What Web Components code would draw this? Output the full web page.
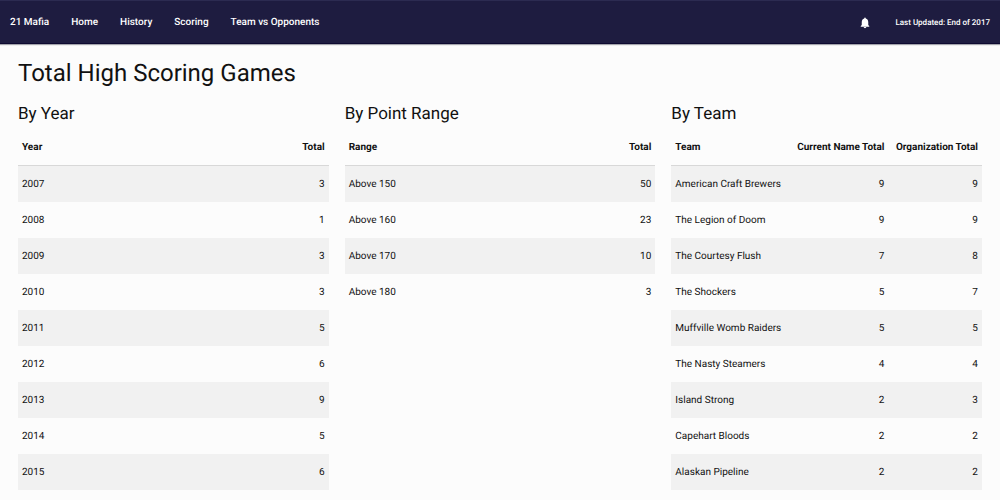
<!DOCTYPE html>
<html lang="en">
<head>
<meta charset="utf-8">
<meta name="viewport" content="width=device-width, initial-scale=1">
<title>21 Mafia – Scoring</title>
<style>
  body {
    margin: 0;
    background: #fcfcfc;
    color: #111;
    font: 10px/16px Roboto, "Liberation Sans", sans-serif;
    text-rendering: geometricPrecision;
  }
</style>
</head>
<body>
<league-app></league-app>

<template id="nav-template">
  <style>
    :host { display: block; }
    header {
      display: flex;
      align-items: center;
      box-sizing: border-box;
      height: 44px;
      padding: 2px 10px 0;
      background: #1e1c40;
      border-top: 1px solid #2c2b51;
      border-bottom: 1px solid #0e0a31;
      box-shadow: 0 1px 1px #a4a4ac;
      color: #fff;
      font-weight: 500;
    }
    a { color: inherit; text-decoration: none; }
    nav { display: flex; gap: 22px; margin-left: 22px; }
    .updated { font-size: 8px; margin-left: 24px; }
    button {
      display: flex;
      margin: 0 0 0 auto;
      padding: 0;
      border: 0;
      background: none;
      color: inherit;
    }
    svg { display: block; fill: currentColor; }
  </style>
  <header>
    <a class="brand" href="#"><slot name="brand"></slot></a>
    <nav aria-label="Main"></nav>
    <button type="button" aria-label="Notifications">
      <svg width="12" height="12" viewBox="0 0 24 24" aria-hidden="true"><path d="M12 22.500c1.400 0 2.500-1 2.500-2.300h-5c0 1.300 1.100 2.300 2.500 2.300zM18.500 16V10.500c0-3.700-1.700-6.600-5-7.400V2.500c0-.8-.7-1.500-1.500-1.500S10.500 1.700 10.500 2.500v.6C7.200 3.900 5.500 6.800 5.500 10.500V16L3.500 18v1.500h17V18z"/></svg>
    </button>
    <span class="updated"><slot name="updated"></slot></span>
  </header>
</template>

<template id="table-template">
  <style>
    :host { display: block; min-width: 0; }
    h2 { margin: 0 0 2px; font-size: 17px; line-height: 26px; font-weight: 400; }
    table { width: 100%; border-collapse: separate; border-spacing: 0; }
    th, td { box-sizing: border-box; height: 36px; padding: 2px 4px 0; text-align: right; white-space: nowrap; }
    th { height: 37px; border-bottom: 1px solid #d8d8d8; font-weight: 700; }
    th:first-child, td:first-child { text-align: left; }
    tbody tr:nth-child(odd) { background: #f1f1f1; }
  </style>
  <h2 id="heading"></h2>
  <table aria-labelledby="heading">
    <thead><tr></tr></thead>
    <tbody></tbody>
  </table>
</template>

<template id="app-template">
  <style>
    :host { display: block; }
    main { padding: 13px 18px 10px; }
    h1 { margin: 0 0 12px; font-size: 24px; line-height: 32px; font-weight: 400; }
    .tables { display: grid; grid-template-columns: repeat(3, minmax(0, 1fr)); gap: 16px; align-items: start; }
    @media (max-width: 800px) { .tables { grid-template-columns: minmax(0, 1fr); } }
  </style>
  <league-nav>
    <span slot="brand">21 Mafia</span>
    <span slot="updated">Last Updated: End of 2017</span>
  </league-nav>
  <main>
    <h1>Total High Scoring Games</h1>
    <div class="tables"></div>
  </main>
</template>

<script>
  const fromTemplate = (host, id) => {
    const root = host.attachShadow({ mode: "open" });
    root.append(document.getElementById(id).content.cloneNode(true));
    return root;
  };

  customElements.define("league-nav", class extends HTMLElement {
    constructor() {
      super();
      const nav = fromTemplate(this, "nav-template").querySelector("nav");
      for (const label of ["Home", "History", "Scoring", "Team vs Opponents"]) {
        const link = document.createElement("a");
        link.href = "#";
        link.textContent = label;
        nav.append(link);
      }
    }
  });

  customElements.define("score-table", class extends HTMLElement {
    constructor() {
      super();
      fromTemplate(this, "table-template");
    }
    set data({ title, columns, rows }) {
      const root = this.shadowRoot;
      root.querySelector("h2").textContent = title;
      root.querySelector("thead tr").replaceChildren(...columns.map(text => {
        const th = document.createElement("th");
        th.scope = "col";
        th.textContent = text;
        return th;
      }));
      root.querySelector("tbody").replaceChildren(...rows.map(row => {
        const tr = document.createElement("tr");
        for (const value of row) tr.insertCell().textContent = value;
        return tr;
      }));
    }
  });

  const tables = [
    { title: "By Year", columns: ["Year", "Total"], rows: [
      [2007, 3], [2008, 1], [2009, 3], [2010, 3], [2011, 5],
      [2012, 6], [2013, 9], [2014, 5], [2015, 6]] },
    { title: "By Point Range", columns: ["Range", "Total"], rows: [
      ["Above 150", 50], ["Above 160", 23], ["Above 170", 10], ["Above 180", 3]] },
    { title: "By Team", columns: ["Team", "Current Name Total", "Organization Total"], rows: [
      ["American Craft Brewers", 9, 9], ["The Legion of Doom", 9, 9],
      ["The Courtesy Flush", 7, 8], ["The Shockers", 5, 7],
      ["Muffville Womb Raiders", 5, 5], ["The Nasty Steamers", 4, 4],
      ["Island Strong", 2, 3], ["Capehart Bloods", 2, 2], ["Alaskan Pipeline", 2, 2]] }
  ];

  customElements.define("league-app", class extends HTMLElement {
    constructor() {
      super();
      const grid = fromTemplate(this, "app-template").querySelector(".tables");
      for (const data of tables) {
        const table = document.createElement("score-table");
        table.data = data;
        grid.append(table);
      }
    }
  });
</script>
</body>
</html>
